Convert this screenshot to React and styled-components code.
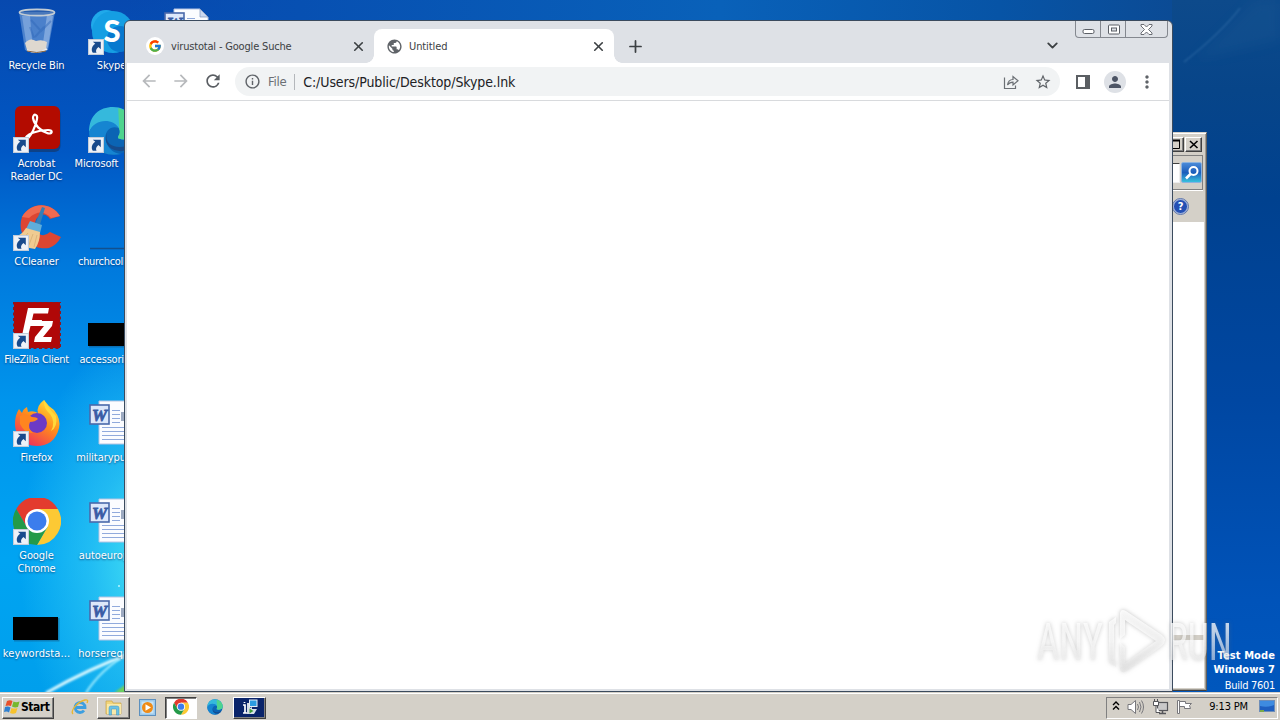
import styled, { createGlobalStyle, css } from 'styled-components'
import { ChevronDown, Plus, X } from 'lucide-react'
import { FcGoogle } from 'react-icons/fc'
import {
    MdArrowBack,
    MdArrowForward,
    MdInfoOutline,
    MdMoreVert,
    MdPerson,
    MdPublic,
    MdRefresh,
    MdStarBorder,
} from 'react-icons/md'

const columns = [
    [
        { label: 'Recycle Bin', icon: <BinIcon /> },
        { label: 'Acrobat Reader DC', icon: <AcrobatIcon />, shortcut: true },
        { label: 'CCleaner', icon: <CCleanerIcon />, shortcut: true },
        { label: 'FileZilla Client', icon: <FileZillaIcon />, shortcut: true, track: -0.3 },
        { label: 'Firefox', icon: <FirefoxIcon />, shortcut: true },
        { label: 'Google Chrome', icon: <ChromeIcon size={48} />, shortcut: true },
        { label: 'keywordsta...', icon: <BlackIcon />, wide: true, track: 0.1 },
    ],
    [
        { label: 'Skype', icon: <SkypeIcon />, shortcut: true },
        { label: 'Microsoft  Edge', icon: <EdgeIcon size={50} />, shortcut: true, wide: true, track: -0.15 },
        { label: 'churchcollec...', icon: <LineIcon />, wide: true, track: -0.3 },
        { label: 'accessories...', icon: <BlackIcon />, wide: true, track: -0.2 },
        { label: 'militarypubli...', icon: <WordIcon />, wide: true, track: -0.05 },
        { label: 'autoeurope...', icon: <WordIcon />, wide: true, track: -0.05 },
        { label: 'horserequir...', icon: <WordIcon />, wide: true, track: 0.1 },
    ],
    [{ label: '', icon: <WordIcon /> }],
]

export default function App() {
    return (
        <Desktop>
            <GlobalStyle />
            <Wallpaper />
            <IconColumns>
                {columns.map((items, i) => (
                    <IconColumn key={i}>
                        {items.map((item, j) => (
                            <DesktopItem key={j}>
                                <IconBox>
                                    {item.icon}
                                    {item.shortcut && <Shortcut />}
                                </IconBox>
                                <Label $wide={item.wide} $track={item.track}>{item.label}</Label>
                            </DesktopItem>
                        ))}
                    </IconColumn>
                ))}
            </IconColumns>
            <BuildInfo>
                <b>Test Mode</b>
                <b>Windows 7</b>
                <span>Build 7601</span>
            </BuildInfo>
            <ExplorerWindow />
            <ChromeWindow />
            <Watermark />
            <Taskbar />
        </Desktop>
    )
}

function Wallpaper() {
    return (
        <WallpaperArt viewBox="0 0 1280 720">
            <defs>
                <filter id="soft"><feGaussianBlur stdDeviation="1.2" /></filter>
                <filter id="softer"><feGaussianBlur stdDeviation="6" /></filter>
            </defs>
            <path d="M1195 60 L1255 0 L1280 0 L1280 40 Z" fill="#1d5a94" opacity=".3" filter="url(#softer)" />
            <path d="M1184 62 Q1222 32 1240 8" stroke="#5b93c4" strokeWidth="1.2" fill="none" opacity=".4" filter="url(#soft)" />
            <path d="M46 693 Q90 668 130 654" stroke="#d8f8ff" strokeWidth="3" fill="none" filter="url(#soft)" />
            <path d="M86 693 Q100 670 130 652" stroke="#a5efff" strokeWidth="2" fill="none" filter="url(#soft)" />
            <path d="M114 693 L126 684 L126 693 Z" fill="#6fd05a" filter="url(#soft)" />
            <circle cx="119" cy="586" r="1" fill="#b8f4ff" />
        </WallpaperArt>
    )
}

function ChromeWindow() {
    return (
        <Browser>
            <TabStrip>
                <Tab>
                    <Favicon><FcGoogle size={14} /></Favicon>
                    <TabTitle $track="-0.18px">virustotal - Google Suche</TabTitle>
                    <X size={15} strokeWidth={2.6} />
                </Tab>
                <Tab $active>
                    <MdPublic size={17} color="#5f6368" />
                    <TabTitle $track="-0.1px">Untitled</TabTitle>
                    <X size={15} strokeWidth={2.6} />
                </Tab>
                <NewTab><Plus size={19} strokeWidth={2.2} /></NewTab>
                <TabSearch><ChevronDown size={17} strokeWidth={2.6} /></TabSearch>
                <Caption>
                    <CaptionButton $w={25}>
                        <svg width="13" height="7"><rect x="1" y="1.5" width="11" height="4" rx="1.5" fill="#fff" stroke="#5b5f66" /></svg>
                    </CaptionButton>
                    <CaptionButton $w={25} $up>
                        <svg width="13" height="11"><rect x="1.5" y="1" width="11" height="9" rx="1" fill="#fff" stroke="#5b5f66" /><rect x="4.5" y="4" width="5" height="3" fill="#dee1e6" stroke="#5b5f66" /></svg>
                    </CaptionButton>
                    <CaptionButton $w={41} $up>
                        <svg width="13" height="11"><path d="M1 .5H4L6.5 3 9 .5H12V2L8.5 5.5 12 9V10.5H9L6.5 8 4 10.5H1V9L4.5 5.5 1 2Z" fill="#fff" stroke="#5b5f66" strokeWidth=".9" /></svg>
                    </CaptionButton>
                </Caption>
            </TabStrip>
            <Toolbar>
                <NavIcon $dim><MdArrowBack size={20} /></NavIcon>
                <NavIcon $dim><MdArrowForward size={20} /></NavIcon>
                <NavIcon><MdRefresh size={20} /></NavIcon>
                <Omnibox>
                    <MdInfoOutline size={17} color="#5f6368" />
                    <Scheme>File</Scheme>
                    <Url>C:/Users/Public/Desktop/Skype.lnk</Url>
                    <svg width="18" height="16" fill="none" stroke="#6c7075" strokeWidth="1.2">
                        <path d="M2.5 3.5V14.5H13.5V11.5" />
                        <path d="M5.5 11C6 7.5 8 5.5 11 5.5V2.5L16 6.8L11 11V8.2C8.5 8.2 7 9 5.5 11Z" />
                    </svg>
                    <StarSlot><MdStarBorder size={18} color="#5f6368" /></StarSlot>
                </Omnibox>
                <SidePanelIcon />
                <Avatar><MdPerson size={18} /></Avatar>
                <MdMoreVert size={20} color="#5f6368" />
            </Toolbar>
            <Page />
        </Browser>
    )
}

function ExplorerWindow() {
    return (
        <Explorer>
            <ExplorerTitle>
                <ClassicButton>
                    <svg width="12" height="11"><path d="M1.5 1V9.5H9.5V1" fill="none" stroke="#000" /><path d="M1 1.5H10" stroke="#000" strokeWidth="2" /></svg>
                </ClassicButton>
                <ClassicButton>
                    <svg width="10" height="9"><path d="M1 1L8.5 8M8.5 1L1 8" stroke="#000" strokeWidth="1.6" /></svg>
                </ClassicButton>
            </ExplorerTitle>
            <AddressRow>
                <SearchField />
                <SearchButton>
                    <svg width="16" height="16" fill="none" stroke="#fff"><circle cx="9.5" cy="6" r="4" strokeWidth="2" /><path d="M6.5 9L2 13.5" strokeWidth="2.6" /></svg>
                </SearchButton>
            </AddressRow>
            <CommandRow><HelpButton>?</HelpButton></CommandRow>
            <ExplorerBody />
            <ExplorerSplit />
            <ExplorerFooter />
        </Explorer>
    )
}

function Taskbar() {
    return (
        <Bar>
            <StartButton>
                <FlagLogo />
                Start
            </StartButton>
            <Task $flat $w={34}>
                <svg width="18" height="18" viewBox="0 0 18 18" fill="none">
                    <path d="M4 9.5H14A5 5 0 1 0 13 12.5" stroke="#3d9fe0" strokeWidth="2.8" />
                    <path d="M2 16C-1 13 6 4 14 2C17 1.5 17 3 16 5" stroke="#e8b631" strokeWidth="1.4" />
                </svg>
            </Task>
            <Task $w={33}>
                <svg width="18" height="18" viewBox="0 0 18 18">
                    <path d="M1 3H7L8 5H16V16H1Z" fill="#f1d57a" stroke="#c9a545" strokeWidth=".7" />
                    <path d="M2 6H16V16H2Z" fill="#f9e9a9" />
                    <path d="M4 17V10Q4 8 6 8H12Q14 8 14 10V17H11.5V11H6.5V17Z" fill="#6bc2e5" stroke="#3d91bd" strokeWidth=".5" />
                </svg>
            </Task>
            <Task $flat $w={35}>
                <svg width="17" height="17" viewBox="0 0 17 17">
                    <rect x=".5" y=".5" width="16" height="16" fill="#9dcaec" stroke="#5d90be" />
                    <rect x="2.5" y="2.5" width="12" height="12" fill="#c8e4f6" />
                    <circle cx="8.5" cy="8.5" r="5.5" fill="#ef8b17" />
                    <path d="M6.5 5.3L12 8.5L6.5 11.7Z" fill="#fff" />
                </svg>
            </Task>
            <Task $pressed $w={32}><ChromeIcon size={16} /></Task>
            <Task $flat $w={36}><EdgeIcon size={16} /></Task>
            <Task $navy $w={33}>
                <svg width="20" height="18" viewBox="0 0 20 18">
                    <path d="M3 7H5V15M3 15H7M4.5 5V4" stroke="#fff" strokeWidth="1.7" fill="none" />
                    <path d="M7 5H10V16H7Z" fill="#d7dde6" />
                    <rect x="9.5" y="2" width="7.5" height="6.5" fill="#2c9be0" stroke="#e6edf4" />
                    <path d="M12 9V11H17L14 16H10V10Z" fill="#dbe2ea" />
                    <path d="M9.5 10.5L13.5 13L9.5 15.5Z" fill="#3f9e3a" />
                </svg>
            </Task>
            <Tray>
                <svg width="8" height="11" fill="none" stroke="#000" strokeWidth="1.4"><path d="M1 4L4 1L7 4M1 8.500L4 5.500L7 8.500" /></svg>
                <svg width="18" height="16" fill="none" stroke="#77777b">
                    <path d="M1 5.5H4L8.5 1.5V14.5L4 10.5H1Z" fill="#fff" />
                    <path d="M10.5 5Q12.5 8 10.5 11M12.5 3Q15.5 8 12.5 13M14.5 1.5Q18.5 8 14.5 14.5" />
                </svg>
                <svg width="17" height="16" stroke="#55565a">
                    <rect x="5.5" y="3.5" width="10" height="8" fill="#c9c9c9" strokeWidth="1.2" />
                    <path d="M7 14.5H14M10.5 12V14" fill="none" strokeWidth="1.5" />
                    <path d="M1.5 2.5H6.5V6.5H1.5ZM2.5 0V2M5.5 0V2M4 7V13.5H8" fill="#fff" />
                </svg>
                <svg width="17" height="16" stroke="#77777b" fill="#fff">
                    <path d="M3.5 2.5H9.5V4.5H15.5L13.5 6.5L14.5 9.5H8.5V7.5H3.5Z" />
                    <path d="M1.5 1.5H3.5V14.5H1.5Z" />
                </svg>
                <Clock>9:13 PM</Clock>
                <svg width="17" height="14">
                    <rect x=".5" y=".5" width="15" height="11" fill="#1f5fc0" stroke="#6d8db8" />
                    <path d="M1 1H15V5Q8 8 1 6Z" fill="#3e8be0" />
                    <rect x="1" y="10" width="4" height="2" fill="#79a949" />
                </svg>
            </Tray>
        </Bar>
    )
}

function Watermark() {
    return (
        <WatermarkArt viewBox="0 0 200 70">
            <defs>
                <linearGradient id="fade" gradientUnits="userSpaceOnUse" x1="0" y1="5" x2="0" y2="66">
                    <stop offset="0" stopColor="#fff" stopOpacity=".85" />
                    <stop offset=".5" stopColor="#fff" stopOpacity=".65" />
                    <stop offset="1" stopColor="#e4e4e4" stopOpacity=".5" />
                </linearGradient>
            </defs>
            <g fontFamily="Roboto, sans-serif" fontSize="51" fill="url(#fade)">
                <text x="3" y="55" textLength="66" lengthAdjust="spacingAndGlyphs">ANY</text>
                <text x="134" y="55" textLength="64" lengthAdjust="spacingAndGlyphs">RUN</text>
            </g>
            <g fill="url(#fade)">
                <path d="M75 17L82 12V18L80 20V55L82 57V62L75 57Z" />
                <path d="M86 8Q87 3 92 6L128 30Q134 35 128 41L93 66Q87 69 86 64V38L91 42V58L122 36L91 15V30L86 34Z" />
            </g>
        </WatermarkArt>
    )
}

function Shortcut() {
    return (
        <ShortcutArt viewBox="0 0 15 15">
            <rect x=".5" y=".5" width="14" height="14" fill="#eef2f8" stroke="#c3ccd9" />
            <path d="M4.5 2.5H12V9.5L9.8 7.5C7.5 9.5 7 11 8 13H4.5C2.5 9.5 4 6.5 6.8 4.5Z" fill="#184a8c" />
        </ShortcutArt>
    )
}

function BinIcon() {
    return (
        <svg width="48" height="48" viewBox="0 0 48 48">
            <path d="M6 4L12 42Q24 48 35 42L42 4Z" fill="#8fb6e4" fillOpacity=".5" />
            <path d="M9 8L14 40Q16 43 20 43L17 8Z" fill="#dcecff" fillOpacity=".3" />
            <path d="M34 7L29 42Q34 42 35 39L40 8Z" fill="#dcecff" fillOpacity=".35" />
            <path d="M18 12L28 23L38 13M22 29L31 19M17 19L21 30" stroke="#2f65b8" strokeWidth="2" fill="none" opacity=".45" />
            <path d="M12 35Q17 29 23 33Q29 31 34 34L33 41Q24 46 14 42Z" fill="#ded8cf" />
            <path d="M14 42Q24 47 34 41" stroke="#eee" strokeWidth="1.5" fill="none" />
            <path d="M14 43Q24 46 33 43" stroke="#88643f" strokeWidth="1" fill="none" />
            <ellipse cx="24" cy="4.5" rx="17.5" ry="3.2" fill="#476fab" fillOpacity=".5" stroke="#c3ccd4" strokeWidth="1.7" />
        </svg>
    )
}

function AcrobatIcon() {
    return (
        <svg width="48" height="48" viewBox="0 0 48 48">
            <rect x="3" y="2" width="44.5" height="44" rx="6" fill="#1a2c4a" opacity=".5" />
            <rect x="2" y="0" width="45" height="43" rx="6" fill="#b30b00" />
            <path d="M12 34C12 28 25 24 35 24C41 24 39 29 34 27C28 25 21 19 20 12C20 7 25 8 24 13C23 20 18 30 14 33C12 35 10 35 12 32" fill="none" stroke="#fff" strokeWidth="2.2" />
        </svg>
    )
}

function CCleanerIcon() {
    return (
        <svg width="48" height="48" viewBox="0 0 48 48">
            <path d="M47 12C38 -3 17 -2 9 13C3 30 17 47 36 44Q44 41 48 33L37 28Q29 35 24 27Q19 15 28 11Q33 9 37 15Z" fill="#dd4632" />
            <path d="M47 12C38 -3 17 -2 9 13L16 14Q28 3 38 14Z" fill="#ef6a50" />
            <path d="M29 3L32 4L26 24L21 23Z" fill="#347fb6" />
            <path d="M17 17L29 21L27 29L13 25Z" fill="#5eaedb" />
            <path d="M13 24L27 28Q27 38 22 45Q10 44 1 33Q8 32 13 24Z" fill="#f0cb91" />
            <path d="M15 29L9 36M20 30L16 41M24 31L21 43" stroke="#dcb57a" fill="none" />
        </svg>
    )
}

function FileZillaIcon() {
    return (
        <svg width="48" height="48" viewBox="0 0 48 48">
            <rect x="1" y="0" width="46" height="46" fill="#b00808" />
            <rect x="1" y="0" width="46" height="46" fill="none" stroke="#8d1620" strokeWidth="2" strokeDasharray="3 2.5" />
            <path d="M15 6H36L35 11.5H20.5L19 18H29L28 24H17.5L14 38H8Z" fill="#fff" />
            <path d="M25 19H40L39 24L30 35H39L38 40H21L22 35L31 24H24Z" fill="#fff" />
        </svg>
    )
}

function FirefoxIcon() {
    return (
        <svg width="48" height="48" viewBox="0 1 48 48">
            <defs>
                <linearGradient id="fox" x1=".8" y1="0" x2=".2" y2="1">
                    <stop offset="0" stopColor="#ffe23c" />
                    <stop offset=".45" stopColor="#ff8c1c" />
                    <stop offset="1" stopColor="#ee2763" />
                </linearGradient>
            </defs>
            <path d="M31 1Q35 7 41 11Q48 20 46 29C43 42 34 47 24 47C10 47 2 36 2 25Q2 16 6 10L9 14Q10 10 14 8L15 13Q20 11 25 14Q23 7 31 1Z" fill="url(#fox)" />
            <circle cx="24" cy="24" r="10" fill="#6c3ac5" />
            <path d="M7 17Q14 14 19 18Q24 18 25 20Q22 23 17 23Q14 29 20 34Q12 35 7 25Z" fill="#ff851f" />
            <path d="M31 1Q30 9 37 15Q43 23 38 32Q45 28 43 17Q35 9 31 1Z" fill="#ffd93a" />
        </svg>
    )
}

function ChromeIcon({ size }) {
    return (
        <svg width={size} height={size} viewBox="0 1 48 48">
            <path d="M3.2 12A24 24 0 0 1 44.8 12H24L13.6 30Z" fill="#e33b2e" />
            <path d="M44.8 12A24 24 0 0 1 24 48L34.4 30L24 12Z" fill="#fcc934" />
            <path d="M24 48A24 24 0 0 1 3.2 12L13.6 30H34.4Z" fill="#249a49" />
            <circle cx="24" cy="24" r="12" fill="#fff" />
            <circle cx="24" cy="24" r="9.5" fill="#3b7ded" />
        </svg>
    )
}

function SkypeIcon() {
    return (
        <svg width="48" height="48" viewBox="0 0 48 48">
            <circle cx="18" cy="17" r="15" fill="#20a9ea" />
            <circle cx="25" cy="24" r="21" fill="#159ee3" />
            <circle cx="32" cy="31" r="13" fill="#0879cf" />
            <text x="24" y="34" textAnchor="middle" fontFamily="Lato, sans-serif" fontSize="31" fontWeight="900" fill="#fff">S</text>
        </svg>
    )
}

function EdgeIcon({ size }) {
    return (
        <svg width={size} height={size} viewBox="0 0 48 48">
            <circle cx="24" cy="24" r="23" fill="#0b64b4" />
            <path d="M1 25C1 9 11 1 24 1C39 1 48 13 47 24C46 31 36 34 29 31C28 29 32 27 30 22C26 14 8 12 1 25Z" fill="#35b9dc" />
            <path d="M29 2C42 6 48 15 47 24C46 31 36 34 29 31C28 29 32 27 30 22Z" fill="#4ed48e" />
            <path d="M1 25C6 11 25 12 29 21C20 18 14 27 18 36C21 43 27 46 32 46C13 50 1 38 1 25Z" fill="#1685d1" />
            <path d="M18 26C15 39 30 43 43 36Q36 45 29 43C19 42 15 34 18 26Z" fill="#164b8d" />
        </svg>
    )
}

function WordIcon() {
    return (
        <svg width="48" height="48" viewBox="0 0 48 48">
            <path d="M11 1H37L45 9V44H11Z" fill="#fbfcff" stroke="#b5c4e2" />
            <path d="M37 1L45 9H37Z" fill="#cbd8ef" stroke="#8095bd" strokeWidth=".7" />
            <path d="M24 10.5H32M24 14.5H32M24 18.5H32M24 22.5H32M14 27.5H42M14 31.5H42M14 35.5H42M14 39.5H42" stroke="#91aadc" />
            <rect x="33" y="12" width="9" height="9" fill="#9daac1" />
            <rect x="2" y="5" width="19" height="19" fill="#dce7fa" stroke="#4a69ab" strokeWidth="1.6" />
            <text x="11.5" y="20.500" textAnchor="middle" fontFamily="Liberation Serif, serif" fontSize="17" fontWeight="700" fontStyle="italic" fill="#3a5ca5" stroke="#3a5ca5" strokeWidth=".8">W</text>
        </svg>
    )
}

function BlackIcon() {
    return (
        <svg width="48" height="48">
            <rect x="1" y="22" width="45.5" height="23.5" fill="#17466f" opacity=".4" />
            <rect x="0" y="21" width="45" height="23" fill="#000" />
        </svg>
    )
}

function LineIcon() {
    return (
        <svg width="48" height="48"><path d="M2 44.5H46" stroke="#12508f" strokeWidth="1.5" /></svg>
    )
}

function FlagLogo() {
    return (
        <svg width="16" height="16" viewBox="0 0 16 16">
            <path d="M3 2Q6 .5 8.5 2L7 7Q4.5 6 1.5 7Z" fill="#e8502a" />
            <path d="M9.5 2.5Q12 4 15.5 2.5L14 8Q11 9 8 7.5Z" fill="#76b82e" />
            <path d="M1 8Q4 7 6.5 8.5L5 13.5Q3 12 0 13Z" fill="#2f80d0" />
            <path d="M7.5 9Q10 10 13.5 9L12 14Q9 15.5 6 14Z" fill="#f7c22c" />
        </svg>
    )
}

const GlobalStyle = createGlobalStyle`
    body {
        margin: 0;
        overflow: hidden;
    }
    svg {
        display: block;
        flex-shrink: 0;
    }
`

const tahoma = css`
    font-family: "DejaVu Sans Condensed", "DejaVu Sans", sans-serif;
    font-stretch: condensed;
`

const raised = css`
    border: 1px solid;
    border-color: #fff #404040 #404040 #fff;
    box-shadow: inset -1px -1px 0 #808080;
`

const Desktop = styled.main`
    ${tahoma}
    position: relative;
    width: 1280px;
    height: 720px;
    overflow: hidden;
    font-size: 11px;
    color: #fff;
    background:
        radial-gradient(ellipse 130px 230px at 150px 560px, #45e0f4 0%, rgba(60, 210, 245, .55) 45%, transparent 100%),
        linear-gradient(90deg, transparent 1000px, rgba(0, 64, 150, .9) 1172px),
        linear-gradient(180deg, #0749af 0, #0057c4 150px, #0078dc 260px, #0094ec 400px, #00a4f2 560px, #009fec 692px);
`
const WallpaperArt = styled.svg`
    position: absolute;
    inset: 0;
    width: 1280px;
    height: 720px;
    background:
        linear-gradient(180deg, #0d4a8b 0, #074589 90px, #00418f 200px, #0047a2 400px, #0053b9 600px, #0057bd 692px) 1172px 0 / 108px 692px no-repeat,
        linear-gradient(90deg, transparent 125px, #0750b2 300px, #0961b9 720px, #0754a6 1000px, #0b4b95 1172px) 0 0 / 1172px 22px no-repeat;
`
const IconColumns = styled.div`
    position: relative;
    display: flex;
    margin-left: -1px;
    padding-top: 8px;
`
const IconColumn = styled.div`
    width: 75px;
    display: flex;
    flex-direction: column;
`
const DesktopItem = styled.div`
    height: 98px;
    display: flex;
    flex-direction: column;
    align-items: center;
`
const IconBox = styled.div`
    position: relative;
    width: 48px;
    height: 48px;
    margin-left: 1px;
`
const ShortcutArt = styled.svg`
    position: absolute;
    left: 0;
    bottom: 1px;
    width: 16px;
    height: 16px;
`
const Label = styled.span`
    width: ${({ $wide }) => ($wide ? 74 : 68)}px;
    margin-top: 3px;
    line-height: 13px;
    text-align: center;
    letter-spacing: ${({ $track = -0.1 }) => $track}px;
    text-shadow: 0 1px 2px rgba(0, 20, 70, .6);
    ${({ $wide }) => $wide && 'white-space: pre;'}
`
const BuildInfo = styled.div`
    position: absolute;
    right: 5px;
    bottom: 26px;
    display: flex;
    flex-direction: column;
    align-items: flex-end;
    line-height: 14px;
    b { letter-spacing: 0.1px; }
    span { line-height: 16px; padding-top: 1px; letter-spacing: -0.3px; }
`

const Browser = styled.section`
    position: absolute;
    left: 124px;
    top: 20px;
    width: 1049px;
    height: 672px;
    box-sizing: border-box;
    display: flex;
    flex-direction: column;
    padding: 0 3px 2px 2px;
    border: 1px solid #3b4b5e;
    border-radius: 6px 6px 0 0;
    background: #dee1e6;
`
const TabStrip = styled.div`
    position: relative;
    display: flex;
    align-items: flex-end;
    height: 42px;
    padding-left: 7px;
    color: #3c4043;
`
const Tab = styled.div`
    position: relative;
    display: flex;
    align-items: center;
    gap: 6px;
    box-sizing: border-box;
    width: 240px;
    height: 34px;
    padding: 0 8px 0 12px;
    border-radius: 8px 8px 0 0;
    ${({ $active }) => $active && css`
        background: #fff;
        &::before, &::after {
            content: '';
            position: absolute;
            bottom: 0;
            width: 8px;
            height: 8px;
        }
        &::before {
            left: -8px;
            background: radial-gradient(circle at 0 0, transparent 7.5px, #fff 8px);
        }
        &::after {
            right: -8px;
            background: radial-gradient(circle at 100% 0, transparent 7.5px, #fff 8px);
        }
    `}
`
const Favicon = styled.span`
    display: grid;
    place-items: center;
    width: 18px;
    height: 18px;
    margin-right: 1px;
    border-radius: 50%;
    background: #fff;
`
const TabTitle = styled.span`
    flex: 1;
    letter-spacing: ${({ $track }) => $track};
`
const NewTab = styled.div`
    padding: 0 0 7px 12px;
`
const TabSearch = styled.div`
    margin-left: auto;
    padding: 0 108px 9px 0;
`
const Caption = styled.div`
    position: absolute;
    top: 0;
    right: 1px;
    display: flex;
    border: 1px solid #84888f;
    border-top: 0;
    border-radius: 0 0 4px 4px;
`
const CaptionButton = styled.div`
    display: flex;
    justify-content: center;
    align-items: center;
    box-sizing: border-box;
    width: ${({ $w }) => $w}px;
    height: 16px;
    padding-top: ${({ $up }) => ($up ? 0 : 4)}px;
    border-right: 1px solid #84888f;
    &:last-child { border: 0; }
`
const Toolbar = styled.div`
    display: flex;
    align-items: center;
    box-sizing: border-box;
    height: 38px;
    padding: 0 10px 0 6px;
    background: #fff;
    border-bottom: 1px solid #d8dadd;
`
const NavIcon = styled.div`
    display: grid;
    place-items: center;
    width: 32px;
    color: ${({ $dim }) => ($dim ? '#b7b9bc' : '#5a5e63')};
    svg { position: relative; top: -1px; }
`
const Omnibox = styled.div`
    display: flex;
    align-items: center;
    box-sizing: border-box;
    width: 825px;
    height: 29px;
    margin: 0 16px 0 6px;
    padding: 0 8px 0 9px;
    border-radius: 15px;
    background: #f1f3f4;
`
const Scheme = styled.span`
    margin: 0 8px 0 7px;
    padding-right: 8px;
    line-height: 16px;
    border-right: 1px solid #b4b7bb;
    font-size: 13px;
    letter-spacing: -0.3px;
    color: #6b6f74;
`
const Url = styled.span`
    flex: 1;
    font-size: 14px;
    letter-spacing: -0.1px;
    color: #202124;
`
const StarSlot = styled.div`
    margin-left: 14px;
`
const SidePanelIcon = styled.div`
    box-sizing: border-box;
    width: 14px;
    height: 14px;
    border: 2px solid #5b5f63;
    border-right-width: 5px;
`
const Avatar = styled.div`
    display: grid;
    place-items: center;
    width: 22px;
    height: 22px;
    margin: 0 11px 0 14px;
    border-radius: 50%;
    background: #dee1e6;
    color: #4c5464;
`
const Page = styled.div`
    flex: 1;
    background: #fff;
`

const Explorer = styled.section`
    position: absolute;
    left: 1000px;
    top: 132px;
    width: 207px;
    height: 559px;
    box-sizing: border-box;
    display: flex;
    flex-direction: column;
    padding: 2px;
    border: 1px solid;
    border-color: #d4d0c8 #606060 #404040 #d4d0c8;
    box-shadow: inset 1px 1px 0 #fff, inset -1px -1px 0 #a09c94;
    background: #d4d0c8;
`
const ExplorerTitle = styled.div`
    display: flex;
    justify-content: flex-end;
    gap: 1px;
    height: 20px;
    padding: 2px 2px 0 0;
    box-sizing: border-box;
`
const ClassicButton = styled.div`
    ${raised}
    display: grid;
    place-items: center;
    box-sizing: border-box;
    width: 17px;
    height: 15px;
`
const AddressRow = styled.div`
    display: flex;
    align-items: center;
    box-sizing: border-box;
    height: 35px;
    margin-right: 1px;
    border: 1px solid #808080;
    border-left: 0;
    box-shadow: 0 1px 0 #fff;
`
const SearchField = styled.div`
    flex: 1;
    height: 18px;
    border: 1px solid #404040;
    border-color: #404040 #eee #eee #404040;
    background: #fff;
    margin-right: 1px;
`
const SearchButton = styled.div`
    display: grid;
    place-items: center;
    box-sizing: border-box;
    width: 21px;
    height: 21px;
    border: 1px solid #8bb2df;
    border-radius: 2px;
    background: linear-gradient(#4a8ad8, #1b5dbb 50%, #38c0dd);
`
const CommandRow = styled.div`
    display: flex;
    justify-content: flex-end;
    align-items: center;
    height: 32px;
    padding-right: 16px;
`
const HelpButton = styled.div`
    width: 13px;
    border: 1px solid #a8bbe5;
    border-radius: 50%;
    outline: 1px solid #5d75ae;
    background: #2450b4;
    font-size: 11px;
    font-weight: bold;
    line-height: 13px;
    text-align: center;
`
const ExplorerBody = styled.div`
    flex: 1;
    background: #fff;
`
const ExplorerSplit = styled.div`
    height: 5px;
    background: #d4d0c8;
`
const ExplorerFooter = styled.div`
    height: 48px;
    background: #fff;
`

const WatermarkArt = styled.svg`
    position: absolute;
    left: 1034px;
    top: 605px;
    width: 200px;
    height: 70px;
    filter: drop-shadow(0 0 2px rgba(110, 110, 110, .5));
`

const Bar = styled.footer`
    position: absolute;
    left: 0;
    bottom: 0;
    display: flex;
    align-items: center;
    box-sizing: border-box;
    width: 1280px;
    height: 28px;
    padding: 2px 2px 0;
    border-top: 1px solid #d4d0c8;
    box-shadow: inset 0 1px 0 #fff;
    background: #d4d0c8;
    color: #000;
`
const StartButton = styled.div`
    ${raised}
    display: flex;
    align-items: center;
    gap: 1px;
    box-sizing: border-box;
    width: 52px;
    height: 22px;
    margin-right: 9px;
    padding: 0 0 2px 1px;
    font-size: 12px;
    font-weight: bold;
    letter-spacing: -0.45px;
`
const Task = styled.div`
    ${raised}
    display: grid;
    place-items: center;
    box-sizing: border-box;
    width: ${({ $w }) => $w}px;
    height: 22px;
    padding-bottom: 1px;
    ${({ $flat }) => $flat && 'border-color: transparent; box-shadow: none;'}
    ${({ $pressed }) => $pressed && css`
        border-color: #404040 #fff #fff #404040;
        box-shadow: inset 1px 1px 0 #808080;
        background: #fff;
    `}
    ${({ $navy }) => $navy && 'background: #0a246a;'}
`
const Tray = styled.div`
    display: flex;
    align-items: center;
    gap: 7px;
    box-sizing: border-box;
    height: 22px;
    margin-left: auto;
    padding: 0 1px 2px 5px;
    border: 1px solid;
    border-color: #808080 #fff #fff #808080;
`
const Clock = styled.span`
    margin: 0 4px 0 9px;
    letter-spacing: -0.15px;
`
